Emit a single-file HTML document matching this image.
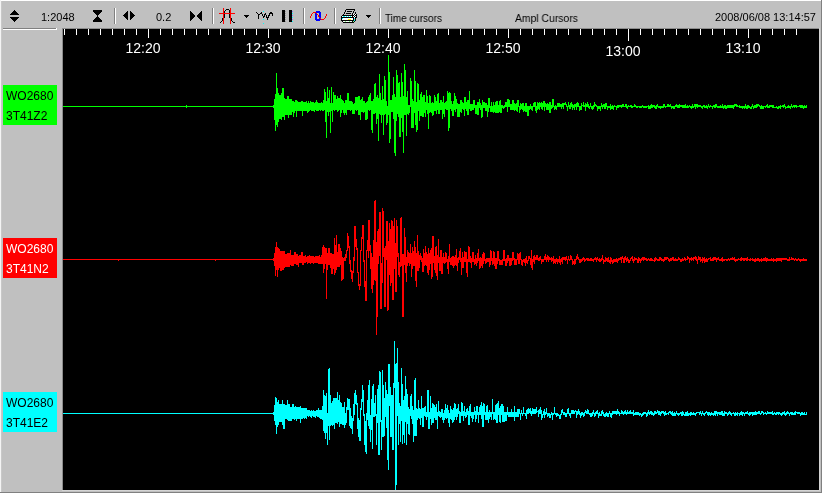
<!DOCTYPE html>
<html><head><meta charset="utf-8"><title>Seismogram</title>
<style>
html,body{margin:0;padding:0}
body{width:823px;height:494px;overflow:hidden;background:#c0c0c0;position:relative;font-family:"Liberation Sans",sans-serif;}
.abs{position:absolute}
.tb{will-change:transform;position:absolute;font-size:11px;line-height:11px;color:#000;white-space:nowrap}
.lab{will-change:transform;position:absolute;left:3px;width:54px;height:40px;font-size:12px;line-height:20px;color:#000;white-space:nowrap}
.lab span{position:absolute;left:3px}
svg{position:absolute;left:0;top:0;will-change:transform}
</style></head><body>
<!-- window bevel -->
<div class="abs" style="left:0;top:0;width:823px;height:1px;background:#fff"></div>
<div class="abs" style="left:0;top:0;width:1px;height:492px;background:#f4f4f4"></div>
<div class="abs" style="left:1px;top:1px;width:1px;height:491px;background:#c8c8c8"></div>
<div class="abs" style="left:0;top:492px;width:823px;height:1px;background:#808080"></div>
<div class="abs" style="left:0;top:493px;width:823px;height:1px;background:#fff"></div>
<div class="abs" style="left:821px;top:0;width:1px;height:493px;background:#808080"></div>
<div class="abs" style="left:822px;top:0;width:1px;height:494px;background:#fff"></div>
<!-- plot frame -->
<div class="abs" style="left:62px;top:28px;width:758px;height:463px;background:#d4d4d4"></div>
<div class="abs" style="left:62px;top:28px;width:757px;height:462px;background:#8c8c8c"></div>
<div class="abs" style="left:63px;top:29px;width:756px;height:461px;background:#000"></div>
<!-- left panel groove -->
<div class="abs" style="left:3px;top:28px;width:53px;height:1px;background:#808080"></div>
<div class="abs" style="left:3px;top:29px;width:54px;height:1px;background:#fff"></div>
<div class="abs" style="left:56px;top:28px;width:1px;height:1px;background:#fff"></div>

<!-- channel labels -->
<div class="lab" style="top:85px;background:#00ff00"><span style="top:1px">WO2680</span><span style="top:21px">3T41Z2</span></div>
<div class="lab" style="top:238px;background:#ff0000;color:#fff"><span style="top:1px">WO2680</span><span style="top:21px">3T41N2</span></div>
<div class="lab" style="top:392px;background:#00ffff"><span style="top:1px">WO2680</span><span style="top:21px">3T41E2</span></div>

<!-- toolbar texts -->
<div class="tb" style="left:41px;top:12px">1:2048</div>
<div class="tb" style="left:156px;top:12px">0.2</div>
<div class="tb" style="left:385px;top:13px;transform-origin:0 0;transform:scaleX(0.9)">Time cursors</div>
<div class="tb" style="left:515px;top:13px;transform-origin:0 0;transform:scaleX(0.945)">Ampl Cursors</div>
<div class="tb" style="left:715px;top:12px;letter-spacing:0px">2008/06/08 13:14:57</div>

<!-- toolbar icons -->
<svg width="823" height="29" viewBox="0 0 823 29" shape-rendering="crispEdges">
<!-- up/down spinner -->
<path d="M14 10h1v1h1v1h1v1h1v1h1v1h-9v-1h1v-1h1v-1h1v-1h1z" fill="#000"/>
<path d="M10 17h9v1h-1v1h-1v1h-1v1h-1v1h-1v-1h-1v-1h-1v-1h-1v-1h-1z" fill="#000"/>
<!-- hourglass -->
<path d="M93 10h9v2h-1v1h-1v1h-1v1h-1v2h1v1h1v1h1v1h1v2h-9v-2h1v-1h1v-1h1v-1h1v-2h-1v-1h-1v-1h-1v-1h-1z" fill="#000"/>
<!-- separators -->
<g>
<rect x="114" y="8" width="1" height="16" fill="#808080"/><rect x="115" y="8" width="1" height="16" fill="#fff"/>
<rect x="212" y="8" width="1" height="16" fill="#808080"/><rect x="213" y="8" width="1" height="16" fill="#fff"/>
<rect x="303" y="8" width="1" height="16" fill="#808080"/><rect x="304" y="8" width="1" height="16" fill="#fff"/>
<rect x="334" y="8" width="1" height="16" fill="#808080"/><rect x="335" y="8" width="1" height="16" fill="#fff"/>
<rect x="379" y="8" width="1" height="16" fill="#808080"/><rect x="380" y="8" width="1" height="16" fill="#fff"/>
</g>
<!-- left/right arrows -->
<path d="M123 15h1v-1h1v-1h1v-1h1v-1h1v9h-1v-1h-1v-1h-1v-1h-1v-1h-1z" fill="#000"/>
<path d="M130 11h1v1h1v1h1v1h1v1h1v1h-1v1h-1v1h-1v1h-1v1h-1z" fill="#000"/>
<!-- bowtie -->
<path d="M190 11h1v1h1v1h1v1h1v1h1v1h2v-1h1v-1h1v-1h1v-1h1v-1h1v10h-1v-1h-1v-1h-1v-1h-1v-1h-1v-1h-2v1h-1v1h-1v1h-1v1h-1v1h-1z" fill="#000"/>
<!-- gaussian with red cursors -->
<g fill="#000">
<rect x="226" y="9" width="3" height="1"/><rect x="225" y="10" width="1" height="1"/><rect x="229" y="10" width="1" height="1"/>
<rect x="224" y="11" width="1" height="7"/><rect x="230" y="11" width="0" height="0"/><rect x="229" y="11" width="1" height="7"/>
<rect x="222" y="18" width="1" height="3"/><rect x="221" y="21" width="1" height="1"/><rect x="220" y="22" width="1" height="1"/>
<rect x="231" y="18" width="1" height="3"/><rect x="232" y="21" width="1" height="1"/><rect x="233" y="22" width="1" height="1"/><rect x="234" y="22" width="1" height="1"/>
</g>
<g fill="#ff0000">
<rect x="223" y="8" width="1" height="16"/><rect x="230" y="8" width="1" height="16"/><rect x="219" y="13" width="16" height="1"/>
</g>
<!-- dropdown arrows -->
<path d="M244 15h5v1h-1v1h-1v1h-1v-1h-1v-1h-1z" fill="#000"/>
<path d="M366 15h5v1h-1v1h-1v1h-1v-1h-1v-1h-1z" fill="#000"/>
<!-- wiggle -->
<g fill="#000">
<rect x="256" y="12" width="1" height="1"/><rect x="257" y="13" width="1" height="1"/><rect x="258" y="14" width="1" height="5"/>
<rect x="259" y="14" width="1" height="1"/><rect x="260" y="13" width="1" height="1"/><rect x="261" y="12" width="1" height="2"/>
<rect x="262" y="14" width="1" height="2"/><rect x="263" y="16" width="1" height="2"/><rect x="264" y="14" width="1" height="3"/>
<rect x="265" y="13" width="1" height="2"/><rect x="266" y="15" width="1" height="3"/><rect x="267" y="17" width="1" height="3"/>
<rect x="268" y="15" width="1" height="3"/><rect x="269" y="13" width="1" height="3"/><rect x="270" y="12" width="1" height="2"/>
<rect x="271" y="12" width="1" height="2"/><rect x="272" y="13" width="1" height="3"/>
</g>
<g fill="#00ffff"><rect x="263" y="11" width="1" height="1"/><rect x="263" y="19" width="1" height="1"/><rect x="263" y="23" width="1" height="1"/></g>
<!-- pause bars -->
<rect x="282" y="10" width="3" height="12" fill="#000"/><rect x="289" y="10" width="3" height="12" fill="#000"/>
<g fill="#9a9a9a"><rect x="285" y="11" width="1" height="1"/><rect x="285" y="13" width="1" height="1"/><rect x="285" y="15" width="1" height="1"/><rect x="285" y="17" width="1" height="1"/><rect x="285" y="19" width="1" height="1"/><rect x="285" y="21" width="1" height="1"/></g>
<g><rect x="292" y="11" width="1" height="1" fill="#8080ff"/><rect x="292" y="13" width="1" height="1" fill="#00ffff"/><rect x="292" y="15" width="1" height="1" fill="#8080ff"/><rect x="292" y="17" width="1" height="1" fill="#00ffff"/><rect x="292" y="19" width="1" height="1" fill="#8080ff"/><rect x="292" y="21" width="1" height="1" fill="#00ffff"/></g>
<!-- sine + blue 0 -->

<path d="M316 11h4v1h1v8h-1v1h-4v-1h-1v-8h1zM317 13v6h2v-6z" fill="#0000ff" fill-rule="evenodd"/>
<g fill="#ff0000">
<rect x="310" y="16" width="1" height="2"/><rect x="311" y="14" width="1" height="2"/><rect x="312" y="13" width="1" height="1"/><rect x="313" y="12" width="3" height="1"/>
<rect x="316" y="13" width="1" height="1"/><rect x="317" y="14" width="1" height="1"/><rect x="318" y="15" width="1" height="2"/><rect x="319" y="17" width="1" height="1"/>
<rect x="320" y="18" width="1" height="1"/><rect x="321" y="19" width="3" height="1"/><rect x="324" y="18" width="1" height="1"/><rect x="325" y="16" width="1" height="2"/><rect x="326" y="14" width="1" height="2"/>
</g>
<!-- printer -->
<g fill="#000"><rect x="346" y="9" width="9" height="1"/><rect x="345" y="10" width="1" height="1"/><rect x="354" y="10" width="1" height="1"/><rect x="345" y="11" width="1" height="1"/><rect x="347" y="11" width="5" height="1"/><rect x="353" y="11" width="1" height="1"/><rect x="344" y="12" width="1" height="1"/><rect x="353" y="12" width="1" height="1"/><rect x="355" y="12" width="1" height="1"/><rect x="344" y="13" width="1" height="1"/><rect x="346" y="13" width="5" height="1"/><rect x="352" y="13" width="1" height="1"/><rect x="355" y="13" width="1" height="1"/><rect x="343" y="14" width="1" height="1"/><rect x="352" y="14" width="1" height="1"/><rect x="354" y="14" width="1" height="1"/><rect x="356" y="14" width="1" height="1"/><rect x="342" y="15" width="12" height="1"/><rect x="355" y="15" width="1" height="1"/><rect x="356" y="15" width="1" height="1"/><rect x="341" y="16" width="1" height="1"/><rect x="352" y="16" width="1" height="1"/><rect x="354" y="16" width="1" height="1"/><rect x="356" y="16" width="1" height="1"/><rect x="341" y="17" width="13" height="1"/><rect x="355" y="17" width="1" height="1"/><rect x="356" y="17" width="1" height="1"/><rect x="341" y="18" width="1" height="1"/><rect x="353" y="18" width="1" height="1"/><rect x="355" y="18" width="1" height="1"/><rect x="341" y="19" width="1" height="1"/><rect x="353" y="19" width="1" height="1"/><rect x="355" y="19" width="1" height="1"/><rect x="341" y="20" width="13" height="1"/><rect x="355" y="20" width="1" height="1"/><rect x="342" y="21" width="1" height="1"/><rect x="352" y="21" width="1" height="1"/><rect x="354" y="21" width="1" height="1"/><rect x="343" y="22" width="11" height="1"/></g>
<g fill="#fff"><rect x="353" y="14" width="1" height="1"/><rect x="355" y="14" width="1" height="1"/><rect x="354" y="15" width="1" height="1"/><rect x="342" y="16" width="1" height="1"/><rect x="345" y="16" width="1" height="1"/><rect x="347" y="16" width="1" height="1"/><rect x="349" y="16" width="1" height="1"/><rect x="351" y="16" width="1" height="1"/><rect x="353" y="16" width="1" height="1"/><rect x="355" y="16" width="1" height="1"/><rect x="354" y="17" width="1" height="1"/><rect x="343" y="18" width="10" height="1"/><rect x="342" y="19" width="6" height="1"/><rect x="351" y="19" width="1" height="1"/><rect x="352" y="19" width="1" height="1"/><rect x="343" y="21" width="1" height="1"/><rect x="344" y="21" width="1" height="1"/><rect x="346" y="21" width="1" height="1"/><rect x="347" y="21" width="1" height="1"/><rect x="348" y="21" width="1" height="1"/><rect x="350" y="21" width="1" height="1"/><rect x="351" y="21" width="1" height="1"/></g>
<g fill="#00ffff"><rect x="343" y="16" width="1" height="1"/><rect x="344" y="16" width="1" height="1"/><rect x="346" y="16" width="1" height="1"/><rect x="348" y="16" width="1" height="1"/><rect x="350" y="16" width="1" height="1"/><rect x="342" y="18" width="1" height="1"/><rect x="354" y="18" width="1" height="1"/><rect x="354" y="20" width="1" height="1"/></g>
<g fill="#80ff80"><rect x="345" y="21" width="1" height="1"/><rect x="349" y="21" width="1" height="1"/><rect x="353" y="21" width="1" height="1"/></g>
<g fill="#ffff00"><rect x="348" y="19" width="3" height="1"/></g>
</svg>

<!-- plot -->
<svg width="823" height="494" viewBox="0 0 823 494">
<g shape-rendering="crispEdges" fill="none" stroke-width="1">
<path d="M64.5 29V35M76.5 29V35M88.5 29V35M100.5 29V35M112.5 29V35M124.5 29V35M136.5 29V35M148.5 29V38M160.5 29V35M172.5 29V35M184.5 29V35M196.5 29V35M208.5 29V35M220.5 29V35M232.5 29V35M244.5 29V35M256.5 29V35M268.5 29V38M280.5 29V35M292.5 29V35M304.5 29V35M316.5 29V35M328.5 29V35M340.5 29V35M352.5 29V35M364.5 29V35M376.5 29V35M388.5 29V38M400.5 29V35M412.5 29V35M424.5 29V35M436.5 29V35M448.5 29V35M460.5 29V35M472.5 29V35M484.5 29V35M496.5 29V35M508.5 29V38M520.5 29V35M532.5 29V35M544.5 29V35M556.5 29V35M568.5 29V35M580.5 29V35M592.5 29V35M604.5 29V35M616.5 29V35M628.5 29V41M640.5 29V35M652.5 29V35M664.5 29V35M676.5 29V35M688.5 29V35M700.5 29V35M712.5 29V35M724.5 29V35M736.5 29V35M748.5 29V38M760.5 29V35M772.5 29V35M784.5 29V35M796.5 29V35" stroke="#fff"/>
<path d="M63 106.5H273M186.5 105V108" stroke="#00ff00"/>
<path d="M63 259.5H273M118.5 259V261M215.5 259V261" stroke="#ff0000"/>
<path d="M63 413.5H273" stroke="#00ffff"/>
<path d="M273.5 105V108M274.5 99V120M275.5 94V131M276.5 73V125M277.5 88V127M278.5 93V122M279.5 95V119M280.5 95V119M281.5 93V120M282.5 88V117M283.5 88V117M284.5 98V120M285.5 99V115M286.5 99V115M287.5 96V115M288.5 96V118M289.5 99V115M290.5 99V115M291.5 99V115M292.5 101V112M293.5 101V117M294.5 102V113M295.5 100V111M296.5 100V117M297.5 101V111M298.5 102V111M299.5 102V111M300.5 102V111M301.5 101V111M302.5 101V116M303.5 102V111M304.5 102V111M305.5 102V111M306.5 101V111M307.5 103V113M308.5 101V112M309.5 103V111M310.5 101V110M311.5 102V111M312.5 102V111M313.5 102V111M314.5 103V112M315.5 102V110M316.5 100V111M317.5 102V111M318.5 103V111M319.5 103V110M320.5 103V111M321.5 102V110M322.5 103V111M323.5 100V111M324.5 89V110M325.5 92V122M326.5 101V138M327.5 87V112M328.5 98V116M329.5 90V112M330.5 103V133M331.5 87V111M332.5 103V122M333.5 92V110M334.5 95V111M335.5 95V110M336.5 99V110M337.5 96V112M338.5 98V111M339.5 98V110M340.5 95V117M341.5 99V113M342.5 100V110M343.5 101V113M344.5 103V115M345.5 100V113M346.5 100V115M347.5 93V110M348.5 93V110M349.5 101V110M350.5 101V111M351.5 101V110M352.5 102V114M353.5 104V114M354.5 103V114M355.5 97V110M356.5 97V111M357.5 97V110M358.5 96V115M359.5 96V115M360.5 100V120M361.5 99V112M362.5 97V112M363.5 101V113M364.5 101V112M365.5 103V120M366.5 102V120M367.5 101V119M368.5 97V110M369.5 95V111M370.5 93V110M371.5 101V130M372.5 101V133M373.5 99V114M374.5 84V114M375.5 83V113M376.5 97V124M377.5 95V119M378.5 98V141M379.5 74V114M380.5 93V115M381.5 100V123M382.5 86V115M383.5 99V135M384.5 76V115M385.5 80V114M386.5 101V125M387.5 106V123M388.5 55V115M389.5 72V143M390.5 100V139M391.5 100V112M392.5 95V112M393.5 77V119M394.5 94V153M395.5 97V156M396.5 70V121M397.5 75V114M398.5 83V117M399.5 82V137M400.5 97V137M401.5 73V118M402.5 82V132M403.5 96V153M404.5 64V115M405.5 70V115M406.5 97V136M407.5 91V114M408.5 105V115M409.5 105V113M410.5 78V107M411.5 81V128M412.5 99V128M413.5 101V128M414.5 70V113M415.5 81V125M416.5 102V132M417.5 83V130M418.5 84V111M419.5 100V121M420.5 94V116M421.5 92V116M422.5 97V117M423.5 95V117M424.5 95V113M425.5 102V117M426.5 90V110M427.5 96V114M428.5 103V129M429.5 95V113M430.5 96V112M431.5 103V113M432.5 102V116M433.5 103V115M434.5 95V111M435.5 97V111M436.5 101V114M437.5 94V110M438.5 93V114M439.5 103V114M440.5 100V110M441.5 100V110M442.5 102V119M443.5 96V114M444.5 103V117M445.5 102V109M446.5 101V110M447.5 91V110M448.5 93V131M449.5 92V128M450.5 93V109M451.5 101V111M452.5 104V116M453.5 101V116M454.5 93V110M455.5 96V112M456.5 99V109M457.5 103V117M458.5 104V117M459.5 104V117M460.5 100V112M461.5 100V113M462.5 102V109M463.5 103V110M464.5 97V116M465.5 97V109M466.5 102V111M467.5 100V115M468.5 100V115M469.5 91V109M470.5 104V111M471.5 104V111M472.5 104V110M473.5 100V110M474.5 100V108M475.5 105V114M476.5 105V114M477.5 102V115M478.5 102V115M479.5 99V108M480.5 103V110M481.5 105V118M482.5 100V117M483.5 102V108M484.5 102V108M485.5 103V111M486.5 103V111M487.5 105V117M488.5 98V112M489.5 98V108M490.5 106V112M491.5 102V112M492.5 106V112M493.5 102V113M494.5 105V112M495.5 102V113M496.5 101V113M497.5 101V113M498.5 105V113M499.5 101V112M500.5 100V113M501.5 105V113M502.5 105V108M503.5 106V109M504.5 105V108M505.5 102V107M506.5 102V107M507.5 99V112M508.5 99V107M509.5 100V107M510.5 104V110M511.5 104V110M512.5 100V110M513.5 100V110M514.5 103V111M515.5 104V110M516.5 103V111M517.5 100V112M518.5 100V107M519.5 106V113M520.5 103V110M521.5 104V109M522.5 103V110M523.5 103V112M524.5 106V111M525.5 103V112M526.5 103V112M527.5 106V116M528.5 106V116M529.5 106V110M530.5 104V109M531.5 106V110M532.5 106V111M533.5 103V107M534.5 102V107M535.5 102V111M536.5 106V113M537.5 102V110M538.5 103V109M539.5 102V110M540.5 103V107M541.5 102V109M542.5 103V110M543.5 101V107M544.5 101V111M545.5 103V107M546.5 104V110M547.5 103V110M548.5 104V110M549.5 102V113M550.5 102V113M551.5 105V109M552.5 99V108M553.5 99V107M554.5 106V110M555.5 105V109M556.5 106V110M557.5 103V107M558.5 103V107M559.5 103V107M560.5 104V107M561.5 104V109M562.5 103V107M563.5 103V109M564.5 103V105M565.5 102V105M566.5 104V107M567.5 106V111M568.5 102V107M569.5 105V109M570.5 103V109M571.5 102V107M572.5 104V110M573.5 105V108M574.5 104V110M575.5 104V107M576.5 103V110M577.5 102V107M578.5 103V107M579.5 106V111M580.5 106V110M581.5 103V110M582.5 105V106M583.5 102V107M584.5 105V107M585.5 103V111M586.5 104V107M587.5 102V107M588.5 104V108M589.5 106V109M590.5 103V107M591.5 106V109M592.5 106V110M593.5 105V109M594.5 102V107M595.5 104V106M596.5 105V107M597.5 106V111M598.5 106V109M599.5 106V109M600.5 106V111M601.5 103V107M602.5 105V109M603.5 104V107M604.5 104V109M605.5 103V109M606.5 103V107M607.5 106V110M608.5 106V108M609.5 106V108M610.5 104V110M611.5 106V109M612.5 105V109M613.5 106V110M614.5 105V107M615.5 106V107M616.5 106V110M617.5 105V108M618.5 105V108M619.5 105V107M620.5 105V107M621.5 105V108M622.5 104V107M623.5 104V107M624.5 106V107M625.5 104V107M626.5 104V108M627.5 106V109M628.5 105V107M629.5 106V107M630.5 105V107M631.5 105V108M632.5 106V108M633.5 106V107M634.5 104V107M635.5 105V107M636.5 106V108M637.5 106V108M638.5 106V107M639.5 106V108M640.5 106V108M641.5 106V108M642.5 105V107M643.5 106V108M644.5 106V108M645.5 106V108M646.5 106V108M647.5 106V107M648.5 105V109M649.5 106V109M650.5 105V109M651.5 104V108M652.5 105V108M653.5 105V107M654.5 105V108M655.5 106V109M656.5 105V109M657.5 104V107M658.5 106V108M659.5 106V108M660.5 106V109M661.5 106V108M662.5 106V108M663.5 104V108M664.5 104V107M665.5 106V108M666.5 106V107M667.5 104V107M668.5 104V107M669.5 105V107M670.5 104V107M671.5 106V109M672.5 106V108M673.5 106V109M674.5 106V109M675.5 105V107M676.5 104V107M677.5 105V108M678.5 105V108M679.5 104V108M680.5 105V107M681.5 105V107M682.5 105V108M683.5 105V108M684.5 105V108M685.5 104V108M686.5 106V108M687.5 105V108M688.5 106V108M689.5 105V107M690.5 106V108M691.5 106V109M692.5 104V108M693.5 106V108M694.5 104V107M695.5 104V109M696.5 104V107M697.5 104V108M698.5 105V107M699.5 105V107M700.5 105V107M701.5 106V108M702.5 106V109M703.5 105V107M704.5 105V108M705.5 106V108M706.5 105V108M707.5 106V109M708.5 104V107M709.5 106V108M710.5 105V107M711.5 106V107M712.5 106V109M713.5 105V107M714.5 105V108M715.5 104V108M716.5 104V107M717.5 106V108M718.5 106V108M719.5 106V108M720.5 105V108M721.5 106V108M722.5 104V108M723.5 106V109M724.5 105V108M725.5 105V109M726.5 106V109M727.5 105V108M728.5 105V108M729.5 105V108M730.5 105V108M731.5 105V108M732.5 105V108M733.5 105V109M734.5 104V107M735.5 104V106M736.5 104V107M737.5 105V107M738.5 106V107M739.5 105V108M740.5 106V108M741.5 106V108M742.5 106V109M743.5 106V108M744.5 106V109M745.5 104V108M746.5 106V109M747.5 105V109M748.5 105V108M749.5 106V108M750.5 107V109M751.5 106V109M752.5 104V107M753.5 106V109M754.5 105V108M755.5 105V108M756.5 104V108M757.5 104V107M758.5 104V106M759.5 105V107M760.5 106V109M761.5 105V109M762.5 106V109M763.5 106V109M764.5 106V107M765.5 106V108M766.5 105V107M767.5 104V108M768.5 106V108M769.5 105V108M770.5 105V107M771.5 105V107M772.5 105V108M773.5 105V108M774.5 107V108M775.5 107V108M776.5 106V108M777.5 107V109M778.5 106V109M779.5 106V108M780.5 105V109M781.5 106V107M782.5 105V107M783.5 105V108M784.5 104V107M785.5 106V109M786.5 107V108M787.5 106V108M788.5 105V108M789.5 106V108M790.5 106V109M791.5 104V107M792.5 106V108M793.5 105V107M794.5 105V108M795.5 105V107M796.5 105V108M797.5 106V107M798.5 106V107M799.5 105V107M800.5 105V108M801.5 105V108M802.5 105V108M803.5 106V109M804.5 105V108M805.5 106V108M806.5 105V108" stroke="#00ff00"/>
<path d="M273.5 258V261M274.5 253V266M275.5 247V276M276.5 242V270M277.5 247V277M278.5 248V270M279.5 249V268M280.5 251V271M281.5 251V271M282.5 251V270M283.5 251V270M284.5 251V268M285.5 254V267M286.5 254V267M287.5 253V267M288.5 253V267M289.5 253V267M290.5 250V265M291.5 255V266M292.5 255V266M293.5 255V266M294.5 252V264M295.5 252V264M296.5 254V265M297.5 254V265M298.5 256V267M299.5 255V263M300.5 255V263M301.5 252V263M302.5 252V265M303.5 256V265M304.5 256V263M305.5 255V263M306.5 257V262M307.5 256V264M308.5 256V263M309.5 255V263M310.5 256V264M311.5 256V263M312.5 256V263M313.5 256V264M314.5 257V263M315.5 256V263M316.5 256V263M317.5 256V263M318.5 256V264M319.5 255V264M320.5 257V264M321.5 255V264M322.5 247V264M323.5 245V273M324.5 247V269M325.5 248V264M326.5 248V299M327.5 253V270M328.5 248V265M329.5 248V265M330.5 253V268M331.5 253V274M332.5 254V274M333.5 254V269M334.5 238V275M335.5 245V273M336.5 235V270M337.5 252V267M338.5 244V267M339.5 244V267M340.5 248V265M341.5 251V281M342.5 257V280M343.5 258V279M344.5 257V261M345.5 254V261M346.5 250V258M347.5 233V251M348.5 236V248M349.5 246V264M350.5 260V272M351.5 270V279M352.5 271V282M353.5 257V273M354.5 226V261M355.5 226V247M356.5 239V250M357.5 248V273M358.5 272V286M359.5 284V290M360.5 250V286M361.5 237V251M362.5 225V239M363.5 225V262M364.5 260V287M365.5 281V301M366.5 250V301M367.5 240V251M368.5 220V258M369.5 220V251M370.5 245V269M371.5 253V289M372.5 257V293M373.5 240V285M374.5 201V280M375.5 200V281M376.5 242V335M377.5 231V317M378.5 229V264M379.5 212V256M380.5 212V309M381.5 263V309M382.5 208V283M383.5 211V257M384.5 248V307M385.5 246V307M386.5 221V260M387.5 221V311M388.5 241V310M389.5 223V275M390.5 229V286M391.5 220V283M392.5 221V300M393.5 226V300M394.5 218V269M395.5 243V292M396.5 220V292M397.5 226V257M398.5 253V275M399.5 262V277M400.5 218V267M401.5 217V266M402.5 254V317M403.5 254V317M404.5 228V265M405.5 237V273M406.5 257V282M407.5 250V266M408.5 252V263M409.5 253V266M410.5 244V264M411.5 253V277M412.5 247V269M413.5 251V266M414.5 241V266M415.5 247V281M416.5 253V287M417.5 235V271M418.5 251V271M419.5 255V268M420.5 253V260M421.5 256V262M422.5 258V272M423.5 249V272M424.5 253V266M425.5 246V265M426.5 252V266M427.5 254V273M428.5 248V275M429.5 253V270M430.5 250V264M431.5 248V279M432.5 236V277M433.5 236V263M434.5 256V270M435.5 247V273M436.5 246V276M437.5 255V280M438.5 239V263M439.5 257V271M440.5 250V271M441.5 250V274M442.5 257V274M443.5 253V263M444.5 257V264M445.5 252V263M446.5 253V262M447.5 259V269M448.5 256V274M449.5 244V262M450.5 258V265M451.5 257V265M452.5 256V266M453.5 256V268M454.5 257V266M455.5 255V265M456.5 249V266M457.5 258V271M458.5 257V263M459.5 251V260M460.5 248V262M461.5 258V275M462.5 252V268M463.5 257V268M464.5 251V262M465.5 252V262M466.5 252V273M467.5 259V277M468.5 246V262M469.5 247V262M470.5 256V263M471.5 258V268M472.5 252V262M473.5 252V262M474.5 259V265M475.5 255V264M476.5 258V266M477.5 253V263M478.5 249V261M479.5 258V269M480.5 257V268M481.5 258V266M482.5 254V268M483.5 252V264M484.5 253V261M485.5 259V264M486.5 258V263M487.5 258V262M488.5 258V262M489.5 258V267M490.5 250V265M491.5 251V261M492.5 258V265M493.5 251V264M494.5 252V266M495.5 258V269M496.5 258V269M497.5 251V264M498.5 251V261M499.5 259V265M500.5 260V265M501.5 260V265M502.5 259V265M503.5 250V261M504.5 250V261M505.5 259V266M506.5 258V266M507.5 255V263M508.5 255V261M509.5 258V266M510.5 258V266M511.5 258V265M512.5 252V261M513.5 252V260M514.5 258V265M515.5 259V265M516.5 259V265M517.5 253V260M518.5 254V264M519.5 253V264M520.5 252V260M521.5 259V265M522.5 260V266M523.5 259V262M524.5 259V263M525.5 258V266M526.5 256V263M527.5 260V264M528.5 256V261M529.5 256V259M530.5 258V265M531.5 250V268M532.5 259V270M533.5 256V262M534.5 255V264M535.5 257V260M536.5 255V260M537.5 255V260M538.5 258V261M539.5 257V261M540.5 256V260M541.5 259V264M542.5 259V262M543.5 259V262M544.5 256V260M545.5 254V260M546.5 257V262M547.5 255V260M548.5 256V262M549.5 257V260M550.5 258V260M551.5 257V262M552.5 258V261M553.5 256V264M554.5 259V263M555.5 259V264M556.5 258V262M557.5 259V264M558.5 259V262M559.5 256V263M560.5 259V265M561.5 258V262M562.5 257V264M563.5 257V260M564.5 257V260M565.5 257V261M566.5 256V260M567.5 259V264M568.5 256V260M569.5 259V261M570.5 255V260M571.5 256V260M572.5 259V265M573.5 261V264M574.5 259V265M575.5 259V264M576.5 256V260M577.5 254V259M578.5 257V260M579.5 259V263M580.5 259V263M581.5 259V262M582.5 258V261M583.5 257V260M584.5 258V262M585.5 259V261M586.5 258V260M587.5 258V261M588.5 258V261M589.5 259V261M590.5 258V261M591.5 258V261M592.5 259V261M593.5 259V262M594.5 258V260M595.5 257V260M596.5 258V262M597.5 257V260M598.5 259V261M599.5 258V262M600.5 259V262M601.5 258V261M602.5 255V260M603.5 259V264M604.5 260V262M605.5 257V262M606.5 258V261M607.5 258V262M608.5 257V262M609.5 260V263M610.5 257V264M611.5 258V262M612.5 260V264M613.5 259V263M614.5 259V262M615.5 259V262M616.5 258V262M617.5 259V263M618.5 258V261M619.5 258V260M620.5 257V260M621.5 257V263M622.5 256V259M623.5 258V263M624.5 257V263M625.5 256V260M626.5 258V262M627.5 257V261M628.5 259V263M629.5 260V263M630.5 258V261M631.5 257V259M632.5 256V261M633.5 259V263M634.5 257V261M635.5 258V260M636.5 258V260M637.5 259V263M638.5 257V263M639.5 258V261M640.5 259V263M641.5 258V261M642.5 257V260M643.5 257V261M644.5 257V260M645.5 258V260M646.5 258V261M647.5 259V261M648.5 258V260M649.5 259V261M650.5 258V261M651.5 258V261M652.5 259V261M653.5 260V261M654.5 258V262M655.5 257V261M656.5 258V260M657.5 259V261M658.5 259V261M659.5 257V261M660.5 257V260M661.5 258V261M662.5 259V261M663.5 259V262M664.5 257V261M665.5 257V260M666.5 257V260M667.5 257V259M668.5 258V261M669.5 259V262M670.5 258V261M671.5 258V261M672.5 257V260M673.5 257V261M674.5 259V261M675.5 258V261M676.5 259V261M677.5 259V261M678.5 257V260M679.5 258V260M680.5 259V262M681.5 259V262M682.5 258V261M683.5 259V261M684.5 257V260M685.5 258V261M686.5 259V260M687.5 256V260M688.5 257V259M689.5 258V263M690.5 258V260M691.5 257V261M692.5 258V260M693.5 257V261M694.5 257V259M695.5 256V260M696.5 257V261M697.5 259V264M698.5 256V260M699.5 257V260M700.5 257V262M701.5 259V261M702.5 257V263M703.5 258V261M704.5 257V263M705.5 259V262M706.5 258V262M707.5 259V262M708.5 258V260M709.5 258V259M710.5 257V261M711.5 259V261M712.5 258V261M713.5 257V261M714.5 257V260M715.5 257V260M716.5 258V262M717.5 258V260M718.5 257V260M719.5 259V261M720.5 259V261M721.5 258V261M722.5 257V262M723.5 259V261M724.5 259V261M725.5 259V260M726.5 259V261M727.5 259V261M728.5 258V260M729.5 259V261M730.5 258V260M731.5 258V260M732.5 257V260M733.5 258V260M734.5 257V261M735.5 259V262M736.5 259V261M737.5 259V261M738.5 258V260M739.5 259V260M740.5 258V261M741.5 257V261M742.5 258V260M743.5 258V261M744.5 258V261M745.5 258V260M746.5 258V261M747.5 257V261M748.5 259V260M749.5 259V261M750.5 258V261M751.5 259V260M752.5 258V261M753.5 259V261M754.5 259V262M755.5 258V262M756.5 259V261M757.5 258V261M758.5 258V261M759.5 259V262M760.5 259V261M761.5 258V262M762.5 259V261M763.5 258V261M764.5 258V261M765.5 257V261M766.5 258V262M767.5 258V261M768.5 259V261M769.5 259V261M770.5 259V261M771.5 258V261M772.5 259V261M773.5 258V262M774.5 259V261M775.5 259V261M776.5 258V262M777.5 258V261M778.5 258V261M779.5 258V261M780.5 258V261M781.5 258V262M782.5 258V260M783.5 258V260M784.5 258V260M785.5 258V260M786.5 258V260M787.5 259V261M788.5 259V261M789.5 257V261M790.5 259V260M791.5 257V260M792.5 258V260M793.5 258V260M794.5 259V261M795.5 258V260M796.5 259V261M797.5 259V261M798.5 258V260M799.5 259V261M800.5 259V262M801.5 259V261M802.5 259V261M803.5 258V261M804.5 259V261M805.5 259V261M806.5 259V261" stroke="#ff0000"/>
<path d="M273.5 412V415M274.5 405V421M275.5 397V425M276.5 398V434M277.5 402V427M278.5 400V425M279.5 404V422M280.5 404V422M281.5 404V422M282.5 400V425M283.5 404V429M284.5 404V429M285.5 405V419M286.5 405V419M287.5 400V420M288.5 404V421M289.5 404V421M290.5 407V421M291.5 407V421M292.5 404V419M293.5 404V419M294.5 407V420M295.5 406V419M296.5 407V421M297.5 407V419M298.5 407V419M299.5 407V419M300.5 406V423M301.5 408V419M302.5 408V419M303.5 408V418M304.5 408V419M305.5 408V418M306.5 408V419M307.5 410V416M308.5 410V417M309.5 410V416M310.5 411V417M311.5 410V418M312.5 411V416M313.5 410V417M314.5 411V417M315.5 411V418M316.5 410V416M317.5 410V417M318.5 408V417M319.5 410V418M320.5 410V419M321.5 410V419M322.5 406V420M323.5 390V431M324.5 395V433M325.5 396V439M326.5 393V433M327.5 413V445M328.5 369V426M329.5 368V440M330.5 395V426M331.5 403V425M332.5 401V426M333.5 398V425M334.5 398V429M335.5 398V423M336.5 398V423M337.5 392V424M338.5 400V422M339.5 395V427M340.5 402V424M341.5 403V424M342.5 407V425M343.5 407V425M344.5 402V428M345.5 413V425M346.5 407V423M347.5 398V410M348.5 399V410M349.5 399V426M350.5 408V428M351.5 416V429M352.5 418V434M353.5 404V421M354.5 393V415M355.5 390V404M356.5 395V405M357.5 403V429M358.5 418V437M359.5 420V441M360.5 408V441M361.5 399V410M362.5 385V402M363.5 390V416M364.5 414V445M365.5 421V452M366.5 413V454M367.5 400V420M368.5 385V426M369.5 380V429M370.5 415V442M371.5 399V430M372.5 386V449M373.5 384V417M374.5 403V417M375.5 395V416M376.5 414V445M377.5 389V423M378.5 385V455M379.5 371V455M380.5 372V422M381.5 420V450M382.5 370V437M383.5 385V437M384.5 398V436M385.5 382V417M386.5 390V428M387.5 394V460M388.5 364V470M389.5 364V406M390.5 387V437M391.5 395V437M392.5 395V450M393.5 383V450M394.5 341V388M395.5 364V490M396.5 363V485M397.5 348V416M398.5 382V445M399.5 403V424M400.5 406V442M401.5 368V421M402.5 384V444M403.5 400V435M404.5 396V443M405.5 376V422M406.5 389V445M407.5 394V424M408.5 407V434M409.5 409V435M410.5 396V416M411.5 394V419M412.5 406V424M413.5 410V442M414.5 380V436M415.5 378V436M416.5 408V436M417.5 409V420M418.5 400V418M419.5 408V419M420.5 409V425M421.5 396V418M422.5 408V427M423.5 408V427M424.5 407V416M425.5 406V417M426.5 412V420M427.5 390V417M428.5 390V429M429.5 412V429M430.5 396V419M431.5 408V425M432.5 403V423M433.5 404V423M434.5 405V418M435.5 407V420M436.5 404V420M437.5 412V429M438.5 401V416M439.5 411V417M440.5 412V418M441.5 409V417M442.5 409V420M443.5 413V423M444.5 410V420M445.5 404V418M446.5 408V419M447.5 405V418M448.5 410V423M449.5 413V427M450.5 406V419M451.5 409V420M452.5 410V423M453.5 408V422M454.5 403V420M455.5 404V417M456.5 409V420M457.5 408V417M458.5 404V414M459.5 411V423M460.5 412V423M461.5 402V416M462.5 403V416M463.5 411V421M464.5 406V416M465.5 412V418M466.5 409V417M467.5 408V415M468.5 411V425M469.5 406V425M470.5 404V416M471.5 412V418M472.5 412V422M473.5 412V419M474.5 407V415M475.5 411V422M476.5 406V419M477.5 406V415M478.5 412V423M479.5 407V415M480.5 405V415M481.5 402V419M482.5 406V427M483.5 403V427M484.5 404V415M485.5 412V420M486.5 406V420M487.5 405V420M488.5 412V423M489.5 410V419M490.5 412V417M491.5 412V420M492.5 399V414M493.5 412V420M494.5 412V419M495.5 405V420M496.5 404V423M497.5 403V423M498.5 401V415M499.5 408V422M500.5 406V423M501.5 404V415M502.5 404V422M503.5 406V422M504.5 412V422M505.5 412V421M506.5 412V421M507.5 407V415M508.5 412V417M509.5 412V417M510.5 412V417M511.5 409V417M512.5 412V417M513.5 412V417M514.5 406V421M515.5 412V417M516.5 412V417M517.5 409V417M518.5 409V417M519.5 409V414M520.5 413V420M521.5 410V414M522.5 413V416M523.5 407V414M524.5 413V414M525.5 413V416M526.5 410V419M527.5 409V414M528.5 408V414M529.5 409V413M530.5 408V414M531.5 411V416M532.5 408V414M533.5 409V414M534.5 409V414M535.5 409V414M536.5 407V413M537.5 411V412M538.5 410V417M539.5 409V414M540.5 407V414M541.5 410V420M542.5 414V418M543.5 411V415M544.5 409V418M545.5 412V415M546.5 408V414M547.5 413V417M548.5 413V416M549.5 413V418M550.5 414V418M551.5 412V415M552.5 413V420M553.5 413V415M554.5 407V414M555.5 413V415M556.5 413V417M557.5 413V416M558.5 414V416M559.5 415V419M560.5 414V419M561.5 410V415M562.5 409V413M563.5 412V415M564.5 412V415M565.5 413V417M566.5 413V417M567.5 409V414M568.5 408V414M569.5 413V416M570.5 413V418M571.5 410V414M572.5 410V414M573.5 410V414M574.5 411V414M575.5 410V412M576.5 411V418M577.5 411V415M578.5 409V414M579.5 411V415M580.5 413V418M581.5 412V416M582.5 412V415M583.5 413V417M584.5 412V416M585.5 410V413M586.5 411V414M587.5 409V414M588.5 410V414M589.5 413V415M590.5 413V417M591.5 413V417M592.5 412V416M593.5 410V414M594.5 413V417M595.5 412V416M596.5 411V414M597.5 410V414M598.5 413V418M599.5 412V416M600.5 414V416M601.5 411V416M602.5 410V414M603.5 412V416M604.5 414V417M605.5 413V417M606.5 412V416M607.5 413V417M608.5 413V417M609.5 411V414M610.5 413V417M611.5 413V418M612.5 411V415M613.5 411V414M614.5 411V414M615.5 411V414M616.5 411V415M617.5 409V414M618.5 411V414M619.5 412V416M620.5 413V414M621.5 410V414M622.5 411V414M623.5 412V415M624.5 411V414M625.5 410V414M626.5 412V415M627.5 410V414M628.5 412V414M629.5 411V414M630.5 410V414M631.5 412V414M632.5 412V414M633.5 410V416M634.5 413V415M635.5 412V415M636.5 412V415M637.5 412V415M638.5 412V415M639.5 413V416M640.5 413V415M641.5 414V417M642.5 413V416M643.5 412V415M644.5 412V414M645.5 412V414M646.5 413V417M647.5 412V416M648.5 410V414M649.5 412V415M650.5 411V414M651.5 411V415M652.5 412V415M653.5 413V416M654.5 411V415M655.5 411V414M656.5 412V414M657.5 410V413M658.5 411V415M659.5 411V415M660.5 412V416M661.5 411V414M662.5 411V413M663.5 411V414M664.5 412V416M665.5 411V415M666.5 413V415M667.5 413V414M668.5 412V415M669.5 411V413M670.5 411V414M671.5 412V415M672.5 411V416M673.5 413V416M674.5 412V416M675.5 413V416M676.5 411V414M677.5 413V415M678.5 413V416M679.5 413V415M680.5 412V414M681.5 412V416M682.5 411V416M683.5 412V415M684.5 414V416M685.5 412V416M686.5 412V416M687.5 411V416M688.5 413V416M689.5 413V415M690.5 412V416M691.5 412V415M692.5 413V415M693.5 412V415M694.5 413V415M695.5 413V416M696.5 412V414M697.5 412V413M698.5 412V413M699.5 412V415M700.5 411V414M701.5 413V416M702.5 411V414M703.5 413V415M704.5 413V416M705.5 412V414M706.5 411V413M707.5 412V415M708.5 412V416M709.5 412V415M710.5 413V416M711.5 412V415M712.5 413V415M713.5 413V416M714.5 411V415M715.5 411V416M716.5 411V414M717.5 412V416M718.5 412V414M719.5 412V415M720.5 412V415M721.5 411V415M722.5 411V416M723.5 413V416M724.5 411V416M725.5 412V414M726.5 412V414M727.5 413V416M728.5 412V415M729.5 411V414M730.5 412V415M731.5 413V416M732.5 413V414M733.5 412V414M734.5 413V416M735.5 412V416M736.5 413V415M737.5 412V416M738.5 413V414M739.5 413V416M740.5 412V415M741.5 411V415M742.5 412V416M743.5 412V414M744.5 413V416M745.5 412V414M746.5 412V414M747.5 411V414M748.5 413V415M749.5 412V416M750.5 412V415M751.5 412V414M752.5 412V416M753.5 412V415M754.5 412V415M755.5 411V415M756.5 412V415M757.5 412V414M758.5 411V414M759.5 411V414M760.5 413V415M761.5 411V414M762.5 411V413M763.5 412V415M764.5 413V414M765.5 412V414M766.5 413V415M767.5 411V414M768.5 412V414M769.5 412V414M770.5 412V414M771.5 412V414M772.5 411V415M773.5 413V415M774.5 412V414M775.5 413V415M776.5 412V415M777.5 412V414M778.5 412V415M779.5 412V414M780.5 413V415M781.5 413V416M782.5 412V415M783.5 412V414M784.5 411V415M785.5 413V416M786.5 412V415M787.5 411V414M788.5 412V414M789.5 413V416M790.5 412V414M791.5 412V415M792.5 412V415M793.5 413V415M794.5 412V415M795.5 411V415M796.5 412V413M797.5 412V414M798.5 412V414M799.5 412V414M800.5 413V416M801.5 412V415M802.5 412V415M803.5 413V415M804.5 412V415M805.5 414V415M806.5 412V415" stroke="#00ffff"/>
</g>
<g font-family="Liberation Sans, sans-serif" font-size="14" fill="#fff"><text x="143" y="53" text-anchor="middle">12:20</text><text x="263" y="53" text-anchor="middle">12:30</text><text x="383" y="53" text-anchor="middle">12:40</text><text x="503" y="53" text-anchor="middle">12:50</text><text x="623" y="56" text-anchor="middle">13:00</text><text x="743" y="53" text-anchor="middle">13:10</text></g>
</svg>
</body></html>
